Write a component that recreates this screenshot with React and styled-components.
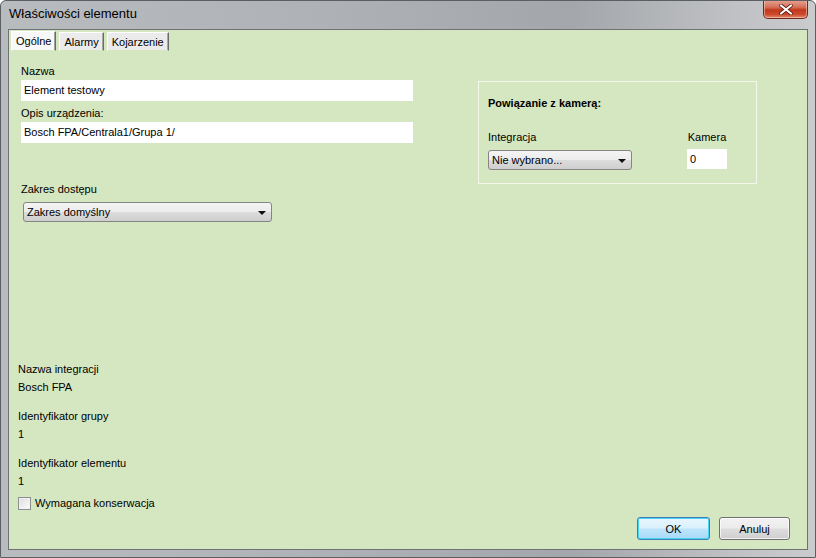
import React from "react";
import styled, { createGlobalStyle } from "styled-components";

const GlobalStyle = createGlobalStyle`
  html, body {
    margin: 0;
    padding: 0;
    background: #ffffff;
  }
  body {
    font-family: "Liberation Sans", Arial, sans-serif;
    font-size: 11px;
    color: #000;
  }
`;

export default function App() {
  return (
    <>
      <GlobalStyle />
      <Window>
        <TitleBar>
          <Title>Właściwości elementu</Title>
          <CloseButton>
            <svg width="14" height="11" viewBox="0 0 14 11">
              <path
                d="M2 1.5 L12 9.5 M12 1.5 L2 9.5"
                stroke="#5a1a10"
                strokeWidth="3.6"
                strokeLinecap="round"
              />
              <path
                d="M2 1.5 L12 9.5 M12 1.5 L2 9.5"
                stroke="#ffffff"
                strokeWidth="2.2"
                strokeLinecap="round"
              />
            </svg>
          </CloseButton>
        </TitleBar>
        <Client>
          <TabStrip>
            <Tab $active>Ogólne</Tab>
            <Tab>Alarmy</Tab>
            <Tab>Kojarzenie</Tab>
          </TabStrip>
          <TopRow>
            <LeftColumn>
              <Label>Nazwa</Label>
              <TextInput>Element testowy</TextInput>
              <Label $top={5}>Opis urządzenia:</Label>
              <TextInput>Bosch FPA/Centrala1/Grupa 1/</TextInput>
              <Label $top={39}>Zakres dostępu</Label>
              <Select $width={249} $left={2}>
                <span>Zakres domyślny</span>
                <Arrow />
              </Select>
            </LeftColumn>
            <GroupBox>
              <GroupTitle>Powiązanie z kamerą:</GroupTitle>
              <GroupRow>
                <Field>
                  <Label>Integracja</Label>
                  <Select $width={144}>
                    <span>Nie wybrano...</span>
                    <Arrow />
                  </Select>
                </Field>
                <Field $center>
                  <Label>Kamera</Label>
                  <SmallInput>0</SmallInput>
                </Field>
              </GroupRow>
            </GroupBox>
          </TopRow>
          <Spacer />
          <InfoBlock>
            <InfoLabel>Nazwa integracji</InfoLabel>
            <InfoValue>Bosch FPA</InfoValue>
            <InfoLabel>Identyfikator grupy</InfoLabel>
            <InfoValue>1</InfoValue>
            <InfoLabel>Identyfikator elementu</InfoLabel>
            <InfoValue>1</InfoValue>
            <CheckRow>
              <CheckBox />
              <span>Wymagana konserwacja</span>
            </CheckRow>
          </InfoBlock>
          <Footer>
            <Button $primary>OK</Button>
            <Button>Anuluj</Button>
          </Footer>
        </Client>
      </Window>
    </>
  );
}

const Window = styled.div`
  width: 816px;
  height: 558px;
  box-sizing: border-box;
  display: flex;
  flex-direction: column;
  border-radius: 6px 6px 0 0;
  border: 1px solid #5b5e62;
  background: linear-gradient(
    90deg,
    #b9bcbf 0%,
    #aeb1b5 40%,
    #a3a6aa 70%,
    #bfc1c4 90%,
    #c9cbcd 100%
  );
  overflow: hidden;
`;

const TitleBar = styled.div`
  height: 28px;
  display: flex;
  align-items: flex-start;
  justify-content: space-between;
  padding-left: 8px;
  padding-right: 7px;
`;

const Title = styled.div`
  margin-top: 5px;
  font-size: 13px;
  color: #000;
`;

const CloseButton = styled.div`
  width: 43px;
  height: 18px;
  margin-top: -1px;
  display: flex;
  align-items: center;
  justify-content: center;
  border: 1px solid #6b2a20;
  border-top: none;
  border-radius: 0 0 5px 5px;
  background: linear-gradient(
    180deg,
    #e8a593 0%,
    #d5705a 40%,
    #c2381c 55%,
    #cd4a2c 80%,
    #e08b6e 100%
  );
  box-shadow: inset 0 0 0 1px rgba(255, 220, 200, 0.5);
`;

const Client = styled.div`
  margin: 0 7px 7px 7px;
  flex: 1;
  display: flex;
  flex-direction: column;
  background: #d5e7c0;
  border: 1px solid #6f7275;
  padding: 1px 17px 9px 1px;
`;

const TabStrip = styled.div`
  display: flex;
  gap: 3px;
  padding-left: 1px;
  height: 20px;
  align-items: flex-end;
`;

const Tab = styled.div`
  display: flex;
  align-items: center;
  height: ${(p) => (p.$active ? 20 : 19)}px;
  box-sizing: border-box;
  padding: 0 4px;
  background: ${(p) => (p.$active ? "#f8f8f8" : "#ebebeb")};
  border: 1px solid;
  border-color: #ffffff #6b6b6b #d5e7c0 #ffffff;
  box-shadow: ${(p) =>
    p.$active ? "inset -1px 0 0 #a0a0a0" : "inset -1px 0 0 #a8a8a8"};
  font-size: 11px;
`;

const TopRow = styled.div`
  display: flex;
  align-items: flex-start;
  padding-left: 11px;
  padding-top: 13px;
  gap: 65px;
`;

const LeftColumn = styled.div`
  width: 392px;
  display: flex;
  flex-direction: column;
`;

const Label = styled.div`
  height: 14px;
  line-height: 14px;
  margin-top: ${(p) => p.$top || 0}px;
  margin-bottom: 2px;
  white-space: nowrap;
`;

const TextInput = styled.div`
  height: 21px;
  line-height: 21px;
  background: #ffffff;
  padding-left: 3px;
  box-sizing: border-box;
`;

const Select = styled.div`
  width: ${(p) => p.$width}px;
  margin-left: ${(p) => p.$left || 0}px;
  margin-top: 4px;
  height: 20px;
  box-sizing: border-box;
  display: flex;
  align-items: center;
  justify-content: space-between;
  padding: 0 5px 0 3px;
  border: 1px solid #858585;
  border-radius: 3px;
  background: linear-gradient(180deg, #f4f4f4 0%, #ececec 48%, #dcdcdc 52%, #cfcfcf 100%);
`;

const Arrow = styled.div`
  width: 0;
  height: 0;
  border-left: 4px solid transparent;
  border-right: 4px solid transparent;
  border-top: 4px solid #111;
  margin-top: 1px;
`;

const GroupBox = styled.div`
  margin-top: 17px;
  width: 279px;
  height: 103px;
  box-sizing: border-box;
  border: 1px solid #f2f7ec;
  padding: 14px 8px 0 9px;
`;

const GroupTitle = styled.div`
  font-weight: bold;
  height: 14px;
  line-height: 14px;
`;

const GroupRow = styled.div`
  display: flex;
  align-items: flex-start;
  justify-content: space-between;
  margin-top: 20px;
  padding-right: 21px;
`;

const Field = styled.div`
  display: flex;
  flex-direction: column;
  align-items: ${(p) => (p.$center ? "center" : "flex-start")};
`;

const SmallInput = styled.div`
  width: 40px;
  height: 20px;
  line-height: 20px;
  margin-top: 3px;
  box-sizing: border-box;
  background: #ffffff;
  padding-left: 3px;
`;

const Spacer = styled.div`
  flex: 1;
`;

const InfoBlock = styled.div`
  display: flex;
  flex-direction: column;
  padding-left: 8px;
`;

const InfoLabel = styled.div`
  height: 14px;
  line-height: 14px;
  &:not(:first-child) {
    margin-top: 15px;
  }
`;

const InfoValue = styled.div`
  height: 14px;
  line-height: 14px;
  margin-top: 4px;
`;

const CheckRow = styled.div`
  display: flex;
  align-items: center;
  gap: 4px;
  margin-top: 8px;
  height: 14px;
`;

const CheckBox = styled.div`
  width: 13px;
  height: 13px;
  box-sizing: border-box;
  border: 1px solid #8e8f8f;
  background: linear-gradient(135deg, #dcdcdc 0%, #f4f4f4 70%, #ffffff 100%);
  box-shadow: inset 0 0 0 1px #f0f0f0;
`;

const Footer = styled.div`
  display: flex;
  justify-content: flex-end;
  gap: 9px;
  margin-top: 7px;
`;

const Button = styled.div`
  width: ${(p) => (p.$primary ? 73 : 71)}px;
  height: 23px;
  box-sizing: border-box;
  display: flex;
  align-items: center;
  justify-content: center;
  border-radius: 3px;
  border: 1px solid ${(p) => (p.$primary ? "#3c7fb1" : "#707070")};
  background: ${(p) =>
    p.$primary
      ? "linear-gradient(180deg, #eaf6fd 0%, #d9f0fc 48%, #bee6fd 52%, #a7d9f5 100%)"
      : "linear-gradient(180deg, #f2f2f2 0%, #ebebeb 48%, #dddddd 52%, #cfcfcf 100%)"};
  box-shadow: ${(p) =>
    p.$primary
      ? "inset 0 0 0 1px #48d4fb"
      : "inset 0 0 0 1px rgba(255,255,255,0.7)"};
`;
